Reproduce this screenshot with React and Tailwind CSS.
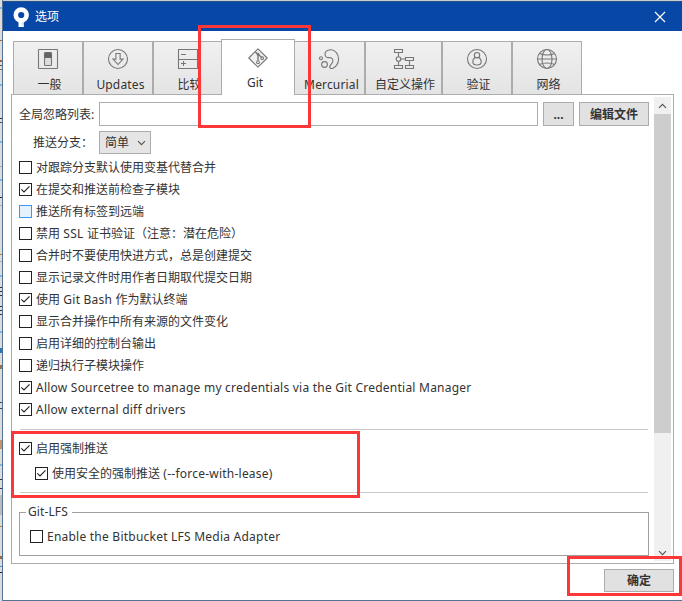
import clsx from "clsx";

const ICON_PROPS = {
  width: 22,
  height: 22,
  viewBox: "0 0 22 22",
  fill: "none",
  stroke: "#777",
  strokeWidth: 1.1,
};

function GeneralIcon() {
  return (
    <svg {...ICON_PROPS}>
      <rect x="1.5" y="1.5" width="19" height="19" rx="0.5" />
      <rect x="7.5" y="4.5" width="7" height="13" rx="1" fill="#ddd" />
      <path d="M8 5h6v4.500H8z" fill="#666" stroke="#666" />
    </svg>
  );
}

function UpdatesIcon() {
  return (
    <svg {...ICON_PROPS}>
      <circle cx="11" cy="11" r="9.5" />
      <path d="M8.9 5.5h4.2v5.6h2.9L11 16.5 6 11.1h2.9z" />
    </svg>
  );
}

function CompareIcon() {
  return (
    <svg {...ICON_PROPS}>
      <path d="M1.5 1.5h19v19h-19zM1.5 11.5h19M4 6.5h5M4 15.5h5M6.5 13v5" />
    </svg>
  );
}

function GitIcon() {
  return (
    <svg {...ICON_PROPS}>
      <path d="M11 1.800 20.200 11 11 20.200 1.800 11z" strokeLinejoin="round" fill="#f2f2f2" />
      <path d="M8 4.800 11 7.300v6.200M11.500 7.500l3.200 3" strokeWidth="1.400" />
      <circle cx="11" cy="7.200" r="0.900" fill="#777" />
      <circle cx="11" cy="15.200" r="1.400" fill="#fff" />
      <circle cx="15.200" cy="11.200" r="1.300" fill="#fff" />
    </svg>
  );
}

function MercurialIcon() {
  return (
    <svg {...ICON_PROPS}>
      <path d="M8 3.400C10.800.9 15.600 1 18.400 4.600c3 3.900 2.800 9.300.1 12.800-2.100 2.700-5.200 3.800-6.400 2.600-1.300-1.300.2-2.600 1.600-4.400 1.600-2 1.700-4.500-.3-5.500-1.700-.9-3.700.1-5.300-1.300-1.500-1.400-1.400-4 -.1-5.400z" />
      <circle cx="6.5" cy="16.5" r="2.900" />
      <circle cx="3" cy="10.200" r="1.500" />
    </svg>
  );
}

function ActionsIcon() {
  return (
    <svg {...ICON_PROPS}>
      <path d="M1.5 1.5h8v3h-8zM1.5 17.5h8v3h-8zM12.5 17.5h8v3h-8zM12.5 9.5h8v3h-8zM5.5 4.5v4M5.5 13.5v4M8 11h4.500M16.500 12.500v5" />
      <circle cx="5.500" cy="11" r="2.300" />
    </svg>
  );
}

function AuthIcon() {
  return (
    <svg {...ICON_PROPS}>
      <circle cx="11" cy="11" r="9.5" />
      <circle cx="11" cy="7.2" r="2.7" />
      <path d="M9.300 9.500c-1.600.8-2.500 2.500-2.500 4.500 0 2.200 1.600 3 4.200 3s4.200-.8 4.200-3c0-2-.9-3.700-2.500-4.500" />
    </svg>
  );
}

function NetworkIcon() {
  return (
    <svg {...ICON_PROPS}>
      <circle cx="11" cy="11" r="9.500" />
      <ellipse cx="11" cy="11" rx="5" ry="9.500" />
      <path d="M3.500 5.500c4 2 11 2 15 0M1.500 11h19M3.500 16.500c4-2 11-2 15 0" />
    </svg>
  );
}

function SourcetreeLogo() {
  return (
    <svg width="18" height="20" viewBox="0 0 18 20">
      <defs>
        <linearGradient id="stem" x1="0" y1="0.6" x2="1" y2="0.2">
          <stop offset="0.35" stopColor="#fff" />
          <stop offset="1" stopColor="#a9bfe0" />
        </linearGradient>
      </defs>
      <path d="M5.500 12H11v8H5.500z" fill="url(#stem)" />
      <circle cx="8.200" cy="8" r="5.400" fill="none" stroke="#fff" strokeWidth="4.600" />
    </svg>
  );
}

const TABS = [
  { label: "一般", Icon: GeneralIcon, className: "w-[70px]" },
  { label: "Updates", Icon: UpdatesIcon, className: "w-[70px]", latin: true },
  { label: "比较", Icon: CompareIcon, className: "w-[70px]" },
  { label: "Git", Icon: GitIcon, className: "-ml-[2px] w-[74px]", active: true },
  { label: "Mercurial", Icon: MercurialIcon, className: "-ml-[2px] w-[72px]", latin: true },
  { label: "自定义操作", Icon: ActionsIcon, className: "w-[77px]" },
  { label: "验证", Icon: AuthIcon, className: "w-[70px]" },
  { label: "网络", Icon: NetworkIcon, className: "w-[70px]" },
];

const OPTIONS = [
  { label: "对跟踪分支默认使用变基代替合并" },
  { label: "在提交和推送前检查子模块", checked: true },
  { label: "推送所有标签到远端", hover: true },
  { label: "禁用 SSL 证书验证（注意：潜在危险）" },
  { label: "合并时不要使用快进方式，总是创建提交" },
  { label: "显示记录文件时用作者日期取代提交日期" },
  { label: "使用 Git Bash 作为默认终端", checked: true },
  { label: "显示合并操作中所有来源的文件变化" },
  { label: "启用详细的控制台输出" },
  { label: "递归执行子模块操作" },
  { label: "Allow Sourcetree to manage my credentials via the Git Credential Manager", checked: true },
  { label: "Allow external diff drivers", checked: true },
];

// slivers of the windows behind the dialog: [y, height, color]
const BACKDROP = [
  [7, 2, "#7cb5e6"], [40, 1, "#a26a3c"], [60, 2, "#a26a3c"], [65, 1, "#555"], [69, 1, "#a26a3c"],
  [84, 2, "#7cb5e6"], [118, 1, "#333"], [122, 1, "#555"], [141, 2, "#7cb5e6"], [166, 1, "#aaa"],
  [179, 2, "#7cb5e6"], [197, 1, "#223"], [205, 1, "#aaa"], [254, 1, "#c07830"], [261, 1, "#aaa"],
  [275, 2, "#7cb5e6"], [287, 1, "#333"], [291, 1, "#333"], [295, 1, "#333"], [306, 1, "#334"],
  [310, 1, "#334"], [314, 1, "#334"], [331, 2, "#7cb5e6"], [348, 5, "#2878b8"], [365, 4, "#967550"],
  [402, 1, "#446"], [408, 1, "#446"], [440, 9, "#c99460"], [464, 2, "#7cb5e6"], [479, 1, "#335"],
  [488, 1, "#335"], [495, 20, "#bbb"], [526, 1, "#c07830"], [556, 3, "#a26a3c"], [566, 1, "#4a90cc"],
  [572, 1, "#223"],
];

// latin runs are set a little wider than the CJK text around them
function Label({ text }) {
  return (
    <span className="pt-[2px]">
      {text.split(/([\x20-\x7e]+)/).map((part, index) =>
        index % 2 ? <span key={index} className="tracking-[0.23px]">{part}</span> : part,
      )}
    </span>
  );
}

function Tab({ label, Icon, className, active, latin }) {
  return (
    <div
      className={clsx(
        "flex shrink-0 flex-col items-center border border-b-0 border-[#acacac]",
        active ? "relative z-10 h-[56px] bg-white pt-[7px]" : "h-[54px] bg-linear-to-b from-[#f0f0f0] to-[#e4e4e4] pt-[6px]",
        className,
      )}
    >
      <Icon />
      <span
        className={clsx(
          "whitespace-nowrap leading-4",
          active ? "mt-[6px] pr-[6px]" : "mt-[7px]",
          !active && (latin ? "pl-[5px] tracking-[0.15px]" : "pl-[3px]"),
        )}
      >
        {label}
      </span>
    </div>
  );
}

function Checkbox({ label, checked, hover, className }) {
  return (
    <label className={clsx("flex h-[22px] items-center gap-1 whitespace-nowrap", className)}>
      <span
        className={clsx(
          "flex size-[13px] shrink-0 items-center justify-center border",
          hover ? "border-[#3399ff] bg-[#e5f1fb]" : "border-[#222] bg-white",
        )}
      >
        {checked ? (
          <svg width="11" height="11" viewBox="0 0 11 11" fill="none" stroke="#222" strokeWidth="1.100">
            <path d="M1.300 5.300 4 8 9.500 2.300" />
          </svg>
        ) : null}
      </span>
      <Label text={label} />
    </label>
  );
}

function Button({ children, className }) {
  return (
    <button className={clsx("flex items-center justify-center border border-[#acacac] bg-[#e1e1e1] pt-px font-bold", className)}>
      {children}
    </button>
  );
}

function Chevron({ up }) {
  return (
    <svg width="9" height="6" viewBox="0 0 9 6" fill="none" stroke="#555" strokeWidth="1.200">
      <path d={up ? "M1 4.800 4.500 1.300 8 4.800" : "M1 1.200 4.500 4.700 8 1.200"} />
    </svg>
  );
}

function ScrollBar() {
  return (
    <div className="mt-[2px] flex h-[464px] w-[17px] flex-col bg-[#f0f0f0]">
      <div className="flex h-[17px] items-center justify-center"><Chevron up /></div>
      <div className="h-[319px] bg-[#cdcdcd]" />
      <div className="mt-auto flex h-[17px] items-center justify-center"><Chevron /></div>
    </div>
  );
}

function GitPanel() {
  return (
    <div className="-mt-px ml-[8px] flex h-[470px] w-[663px] border border-[#acacac] bg-white">
      <div className="w-[642px] pl-[7px] pt-[7px]">
        <div className="flex h-6 items-center">
          <span className="w-[80px] whitespace-nowrap pt-[2px]">全局忽略列表:</span>
          <input className="h-6 w-[439px] border border-[#acacac] bg-white" />
          <Button className="ml-[5px] h-6 w-[31px]">...</Button>
          <Button className="ml-[5px] h-6 w-[70px]">编辑文件</Button>
        </div>
        <div className="mt-[5px] flex h-[23px] items-center">
          <span className="w-[80px] pl-[14px] pt-px">推送分支：</span>
          <div className="flex h-[23px] w-[52px] items-center justify-between border border-[#acacac] bg-[#e5e5e5] pl-[5px] pr-[4px]">
            <span>简单</span>
            <Chevron />
          </div>
        </div>

        <div className="mt-[2px]">
          {OPTIONS.map((option) => (
            <Checkbox key={option.label} {...option} />
          ))}
        </div>

        <div className="ml-px mt-[9px] h-px w-[628px] bg-[#c8c8c8]" />
        <Checkbox className="mt-[7px]" label="启用强制推送" checked />
        <Checkbox className="ml-[16px] mt-[3px]" label="使用安全的强制推送 (--force-with-lease)" checked />
        <div className="ml-px mt-[8px] h-px w-[628px] bg-[#c8c8c8]" />

        <fieldset className="mt-[11px] h-[52px] w-[630px] border border-[#a0a0a0] pl-[10px]">
          <legend className="-ml-[4px] pl-[2px] pr-[4px] leading-4 tracking-[0.1px]">Git-LFS</legend>
          <Checkbox className="mt-[5px]" label="Enable the Bitbucket LFS Media Adapter" />
        </fieldset>
      </div>
      <ScrollBar />
    </div>
  );
}

function Highlight({ className }) {
  return <div className={clsx("pointer-events-none absolute z-20 border-3 border-[#fc3737]", className)} />;
}

export default function App() {
  return (
    <div className="relative flex h-[601px] w-[682px] overflow-hidden bg-white font-['Noto_Sans','Noto_Sans_CJK_SC',sans-serif] text-[12px] leading-4 text-[#333]">
      <svg width="2" height="601" className="shrink-0 bg-[#dcdcdc]">
        {BACKDROP.map(([y, height, color]) => (
          <rect key={y} x="0" y={y} width="2" height={height} fill={color} />
        ))}
      </svg>

      <div className="flex h-[601px] w-[680px] flex-col border-b border-l border-[#527394]">
        <div className="h-px shrink-0 bg-[#c5cdd0]" />
        <header className="flex h-[30px] shrink-0 items-center border-t border-[#245186] bg-[#0747a6] pl-[10px] text-white">
          <SourcetreeLogo />
          <span className="ml-[4px]">选项</span>
          <svg width="12" height="12" viewBox="0 0 12 12" stroke="#fff" strokeWidth="1.200" className="ml-auto mr-[16px]">
            <path d="M1 1l10 10M11 1L1 11" />
          </svg>
        </header>

        <nav className="mt-[8px] flex h-[56px] shrink-0 items-end pl-[10px]">
          {TABS.map((tab) => (
            <Tab key={tab.label} {...tab} />
          ))}
        </nav>
        <GitPanel />

        <footer className="mt-[5px] flex justify-end pr-[8px]">
          <Button className="h-[23px] w-[70px]">确定</Button>
        </footer>
      </div>

      <Highlight className="left-[198px] top-[25px] h-[103px] w-[113px]" />
      <Highlight className="left-[11px] top-[431px] h-[67px] w-[349px]" />
      <Highlight className="left-[567px] top-[556px] h-[40px] w-[115px]" />
    </div>
  );
}
